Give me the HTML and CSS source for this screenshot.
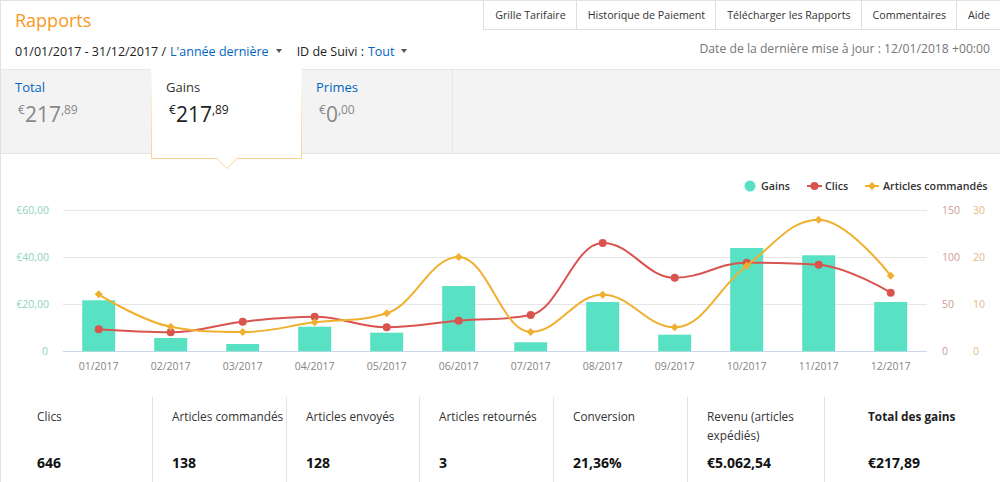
FILE: index.html
```html
<!DOCTYPE html>
<html lang="fr">
<head>
<meta charset="utf-8">
<title>Rapports</title>
<link rel="stylesheet" href="styles.css">
</head>
<body>
<div class="page">
  <header class="topbar">
    <h1 class="title">Rapports</h1>
    <nav class="nav">
      <a class="nav-item">Grille Tarifaire</a>
      <a class="nav-item">Historique de Paiement</a>
      <a class="nav-item">Télécharger les Rapports</a>
      <a class="nav-item">Commentaires</a>
      <a class="nav-item">Aide</a>
    </nav>
  </header>

  <div class="filters">
    <div class="range">
      <span class="dates">01/01/2017 - 31/12/2017 /</span>
      <a class="link period">L'année dernière</a>
      <span class="caret"></span>
      <span class="track">ID de Suivi :</span>
      <a class="link track-val">Tout</a>
      <span class="caret"></span>
    </div>
    <div class="updated">Date de la dernière mise à jour : 12/01/2018 +00:00</div>
  </div>

  <div class="tabs">
    <div class="tab tab-first">
      <div class="tab-label">Total</div>
      <div class="amount"><span class="cur">€</span><span class="int">217</span><span class="dec">,89</span></div>
    </div>
    <div class="tab tab-active">
      <div class="tab-label">Gains</div>
      <div class="amount"><span class="cur">€</span><span class="int">217</span><span class="dec">,89</span></div>
    </div>
    <div class="tab tab-last">
      <div class="tab-label">Primes</div>
      <div class="amount"><span class="cur">€</span><span class="int">0</span><span class="dec">,00</span></div>
    </div>
  </div>

  <section class="chart">
    <svg class="chart-svg" width="999" height="243" viewBox="1 154 999 243" xmlns="http://www.w3.org/2000/svg">
      <g class="legend">
        <circle cx="750" cy="186" r="5.5" fill="#58e1c2"/>
        <text x="761" y="190">Gains</text>
        <line x1="807" x2="822" y1="186" y2="186" stroke="#d9534f" stroke-width="2"/>
        <circle cx="814.5" cy="186" r="4" fill="#d9534f"/>
        <text x="825" y="190">Clics</text>
        <line x1="865" x2="879" y1="186" y2="186" stroke="#f0b02f" stroke-width="2"/>
        <path d="M872 182 L876 186 L872 190 L868 186 Z" fill="#f0b02f"/>
        <text x="883" y="190">Articles commandés</text>
      </g>

      <g stroke="#e6e6e6" stroke-width="1">
        <line x1="63" x2="927" y1="210.5" y2="210.5"/>
        <line x1="63" x2="927" y1="257.5" y2="257.5"/>
        <line x1="63" x2="927" y1="304.5" y2="304.5"/>
      </g>
      <line x1="63" x2="927" y1="351.5" y2="351.5" stroke="#ccd6eb" stroke-width="1"/>

      <g class="axis-left" text-anchor="end">
        <text x="49" y="214">€60,00</text>
        <text x="49" y="261">€40,00</text>
        <text x="49" y="308">€20,00</text>
        <text x="48" y="355">0</text>
      </g>
      <g class="axis-clics">
        <text x="942" y="214">150</text>
        <text x="942" y="261">100</text>
        <text x="942" y="308">50</text>
        <text x="942" y="355">0</text>
      </g>
      <g class="axis-articles">
        <text x="973" y="214">30</text>
        <text x="973" y="261">20</text>
        <text x="973" y="308">10</text>
        <text x="973" y="355">0</text>
      </g>

      <g class="axis-x" text-anchor="middle">
        <text x="98.7" y="370">01/2017</text>
        <text x="170.7" y="370">02/2017</text>
        <text x="242.7" y="370">03/2017</text>
        <text x="314.7" y="370">04/2017</text>
        <text x="386.7" y="370">05/2017</text>
        <text x="458.7" y="370">06/2017</text>
        <text x="530.7" y="370">07/2017</text>
        <text x="602.7" y="370">08/2017</text>
        <text x="674.7" y="370">09/2017</text>
        <text x="746.7" y="370">10/2017</text>
        <text x="818.7" y="370">11/2017</text>
        <text x="890.7" y="370">12/2017</text>
      </g>

      <g fill="#58e1c2">
        <rect x="82.2" y="300.3" width="33" height="51"/>
        <rect x="154.2" y="338" width="33" height="13.3"/>
        <rect x="226.2" y="344" width="33" height="7.3"/>
        <rect x="298.2" y="326.7" width="33" height="24.6"/>
        <rect x="370.2" y="332.7" width="33" height="18.6"/>
        <rect x="442.2" y="286" width="33" height="65.3"/>
        <rect x="514.2" y="342.3" width="33" height="9"/>
        <rect x="586.2" y="302" width="33" height="49.3"/>
        <rect x="658.2" y="334.7" width="33" height="16.6"/>
        <rect x="730.2" y="248" width="33" height="103.3"/>
        <rect x="802.2" y="255.3" width="33" height="96"/>
        <rect x="874.2" y="302" width="33" height="49.3"/>
      </g>

      <path fill="none" stroke="#d9534f" stroke-width="2" d="M98.7,329.3 C98.7,329.3 141.9,332.3 170.7,332.3 C199.5,332.3 213.9,324.82 242.7,321.7 C271.5,318.58 285.9,316.7 314.7,316.7 C343.5,316.7 357.9,327.3 386.7,327.3 C415.5,327.3 429.9,323.16 458.7,320.7 C487.5,318.24 501.9,320.7 530.7,315 C559.5,309.3 573.9,243 602.7,243 C631.5,243 645.9,277.7 674.7,277.7 C703.5,277.7 717.9,262.7 746.7,262.7 C775.5,262.7 789.9,262.7 818.7,264.7 C847.5,266.7 890.7,292.7 890.7,292.7"/>
      <g fill="#d9534f">
        <circle cx="98.7" cy="329.3" r="4"/>
        <circle cx="170.7" cy="332.3" r="4"/>
        <circle cx="242.7" cy="321.7" r="4"/>
        <circle cx="314.7" cy="316.7" r="4"/>
        <circle cx="386.7" cy="327.3" r="4"/>
        <circle cx="458.7" cy="320.7" r="4"/>
        <circle cx="530.7" cy="315" r="4"/>
        <circle cx="602.7" cy="243" r="4"/>
        <circle cx="674.7" cy="277.7" r="4"/>
        <circle cx="746.7" cy="262.7" r="4"/>
        <circle cx="818.7" cy="264.7" r="4"/>
        <circle cx="890.7" cy="292.7" r="4"/>
      </g>

      <path fill="none" stroke="#f0b02f" stroke-width="2" d="M98.7,294.3 C98.7,294.3 141.9,321.4 170.7,326.7 C199.5,332 213.9,332 242.7,332 C271.5,332 285.9,326.04 314.7,322.3 C343.5,318.56 357.9,322.3 386.7,313.3 C415.5,304.3 429.9,257 458.7,257 C487.5,257 501.9,332 530.7,332 C559.5,332 573.9,294.7 602.7,294.7 C631.5,294.7 645.9,327.3 674.7,327.3 C703.5,327.3 717.9,287.22 746.7,265.7 C775.5,244.18 789.9,219.7 818.7,219.7 C847.5,219.7 890.7,275.7 890.7,275.7"/>
      <g fill="#f0b02f">
        <path d="M98.7 290.3 L102.7 294.3 L98.7 298.3 L94.7 294.3 Z"/>
        <path d="M170.7 322.7 L174.7 326.7 L170.7 330.7 L166.7 326.7 Z"/>
        <path d="M242.7 328 L246.7 332 L242.7 336 L238.7 332 Z"/>
        <path d="M314.7 318.3 L318.7 322.3 L314.7 326.3 L310.7 322.3 Z"/>
        <path d="M386.7 309.3 L390.7 313.3 L386.7 317.3 L382.7 313.3 Z"/>
        <path d="M458.7 253 L462.7 257 L458.7 261 L454.7 257 Z"/>
        <path d="M530.7 328 L534.7 332 L530.7 336 L526.7 332 Z"/>
        <path d="M602.7 290.7 L606.7 294.7 L602.7 298.7 L598.7 294.7 Z"/>
        <path d="M674.7 323.3 L678.7 327.3 L674.7 331.3 L670.7 327.3 Z"/>
        <path d="M746.7 261.7 L750.7 265.7 L746.7 269.7 L742.7 265.7 Z"/>
        <path d="M818.7 215.7 L822.7 219.7 L818.7 223.7 L814.7 219.7 Z"/>
        <path d="M890.7 271.7 L894.7 275.7 L890.7 279.7 L886.7 275.7 Z"/>
      </g>
    </svg>
  </section>

  <section class="stats">
    <div class="stat stat-first"><div class="stat-label">Clics</div><div class="stat-value">646</div></div>
    <div class="stat"><div class="stat-label">Articles commandés</div><div class="stat-value">138</div></div>
    <div class="stat"><div class="stat-label">Articles envoyés</div><div class="stat-value">128</div></div>
    <div class="stat"><div class="stat-label">Articles retournés</div><div class="stat-value">3</div></div>
    <div class="stat"><div class="stat-label">Conversion</div><div class="stat-value">21,36%</div></div>
    <div class="stat"><div class="stat-label">Revenu (articles expédiés)</div><div class="stat-value">€5.062,54</div></div>
    <div class="stat stat-total"><div class="stat-label">Total des gains</div><div class="stat-value">€217,89</div></div>
  </section>
</div>
</body>
</html>
```

FILE: styles.css
```css
* {
  box-sizing: border-box;
}

html,
body {
  margin: 0;
  padding: 0;
  background: #fff;
}

body {
  width: 1000px;
  height: 482px;
  overflow: hidden;
  font-family: "Open Sans", "Noto Sans", "Liberation Sans", sans-serif;
  color: #333;
}

.page {
  width: 1000px;
  border-top: 1px solid #e2e2e2;
  border-left: 1px solid #e2e2e2;
}

/* top bar */
.topbar {
  display: flex;
  justify-content: space-between;
  align-items: flex-start;
  height: 32px;
}

.title {
  margin: 0;
  padding: 6px 0 0 14px;
  font-size: 18px;
  line-height: 26px;
  font-weight: 400;
  color: #f8981d;
}

.nav {
  display: flex;
}

.nav-item {
  display: block;
  height: 29px;
  line-height: 28px;
  padding: 0 10px 0 11px;
  border-left: 1px solid #dedede;
  border-bottom: 1px solid #dedede;
  font-size: 10.7px;
  color: #333;
  text-decoration: none;
  white-space: nowrap;
}

/* filters */
.filters {
  display: flex;
  justify-content: space-between;
  align-items: flex-start;
  height: 36px;
  padding: 10px 10px 0 14px;
}

.range {
  display: flex;
  align-items: center;
  font-size: 12.5px;
  line-height: 18px;
  color: #222;
}

.link {
  color: #0066c0;
  text-decoration: none;
}

.period {
  margin-left: 4px;
}

.track-val {
  margin-left: 4px;
}

.caret {
  display: inline-block;
  width: 0;
  height: 0;
  border-left: 3.5px solid transparent;
  border-right: 3.5px solid transparent;
  border-top: 4px solid #555;
  margin: 0 15px 2px 7px;
}

.updated {
  font-size: 12.2px;
  line-height: 18px;
  margin-top: -3px;
  color: #767676;
}

/* tabs */
.tabs {
  display: flex;
  align-items: flex-start;
  height: 85px;
  background: #f3f3f3;
  border-top: 1px solid #e7e7e7;
  border-bottom: 1px solid #e3e3e3;
}

.tab {
  height: 83px;
  padding: 8px 0 0 14px;
}

.tab-first {
  width: 150px;
}

.tab-last {
  width: 151px;
  border-right: 1px solid #e6e6e6;
}

.tab-active {
  position: relative;
  z-index: 2;
  width: 151px;
  height: 90px;
  margin-top: -1px;
  padding-top: 9px;
  background: #fff;
  border: 1px solid transparent;
  border-top-width: 0;
  border-image: linear-gradient(to bottom, rgba(252, 210, 145, 0) 0%, rgba(252, 210, 145, 0.6) 50%, #fcd291 100%) 1;
}

.tab-active::before,
.tab-active::after {
  content: "";
  position: absolute;
  left: 50%;
  top: 100%;
  width: 0;
  height: 0;
  border-style: solid;
  border-color: transparent;
}

.tab-active::before {
  margin-left: -11px;
  border-width: 11px 11px 0 11px;
  border-top-color: #fcd291;
}

.tab-active::after {
  margin-left: -10px;
  border-width: 10px 10px 0 10px;
  border-top-color: #fff;
}

.tab-label {
  font-size: 13px;
  line-height: 18px;
  color: #0066c0;
}

.tab-active .tab-label {
  color: #333;
}

.amount {
  display: flex;
  align-items: flex-start;
  margin: 6px 0 0 3px;
  color: #888;
}

.tab-active .amount {
  color: #222;
}

.cur,
.dec {
  font-size: 12px;
  line-height: 14px;
  margin-top: 1px;
}

.int {
  font-size: 21px;
  line-height: 24px;
}

/* chart */
.chart {
  height: 243px;
}

.chart-svg {
  display: block;
  font-family: "Open Sans", "Noto Sans", "Liberation Sans", sans-serif;
}

.legend text {
  font-size: 10.7px;
  font-weight: 600;
  fill: #333;
}

.axis-left text {
  font-size: 10.5px;
  fill: #8fd4c2;
}

.axis-clics text {
  font-size: 10.5px;
  fill: #cf9b95;
}

.axis-articles text {
  font-size: 10.5px;
  fill: #e3b787;
}

.axis-x text {
  font-size: 10.5px;
  fill: #858585;
}

/* stats */
.stats {
  display: grid;
  grid-template-columns: 151px 134px 133px 134px 134px 137px 1fr;
  height: 85px;
}

.stat {
  padding: 10px 2px 0 19px;
  border-left: 1px solid #e3e3e3;
}

.stat-first {
  padding-left: 36px;
  border-left: 0;
}

.stat-total {
  padding-left: 43px;
}

.stat-label {
  min-height: 38px;
  font-size: 11.8px;
  line-height: 19px;
  color: #333;
}

.stat-total .stat-label {
  font-weight: 700;
  color: #222;
}

.stat-value {
  margin-top: 8px;
  font-size: 14px;
  line-height: 20px;
  font-weight: 700;
  color: #111;
}
```
